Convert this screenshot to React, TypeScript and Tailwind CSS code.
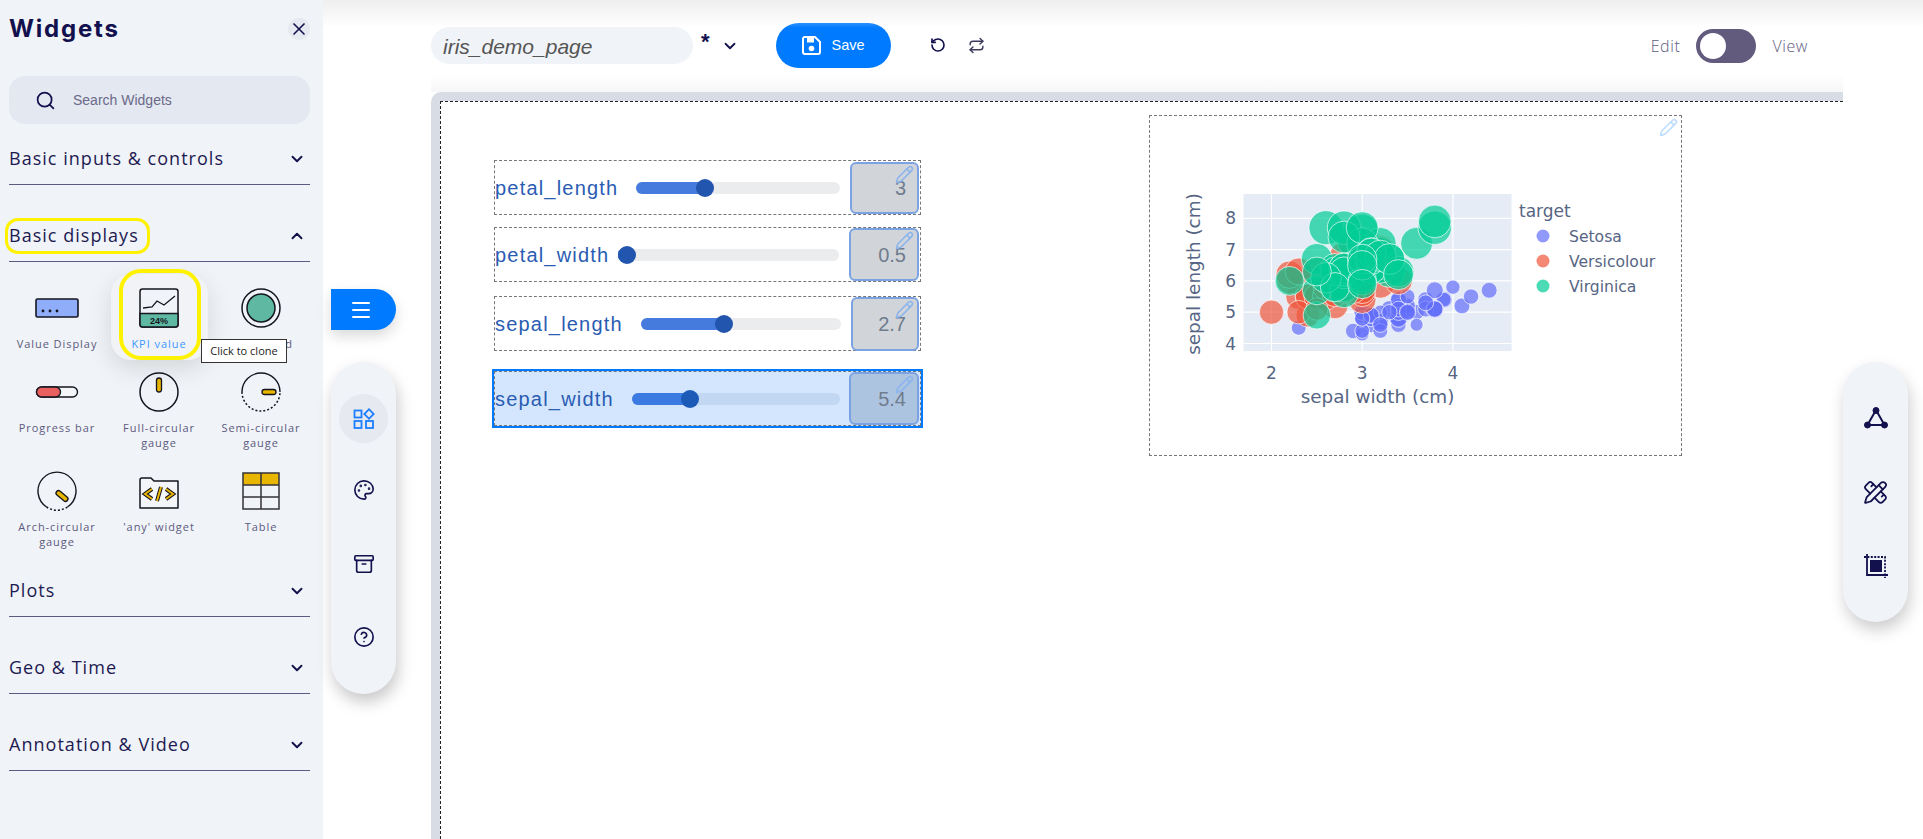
import { Archive, ChevronDown, ChevronUp, CircleHelp, Menu, Palette, Pencil, PencilRuler, Repeat, RotateCcw, Search, X } from "lucide-react";

const setosa = [[5.1,3.5,1.4],[4.9,3,1.4],[4.7,3.2,1.3],[4.6,3.1,1.5],[5,3.6,1.4],[5.4,3.9,1.7],[4.6,3.4,1.4],[5,3.4,1.5],[4.4,2.9,1.4],[4.9,3.1,1.5],[5.4,3.7,1.5],[4.8,3.4,1.6],[4.8,3,1.4],[4.3,3,1.1],[5.8,4,1.2],[5.7,4.4,1.5],[5.4,3.9,1.3],[5.1,3.5,1.4],[5.7,3.8,1.7],[5.1,3.8,1.5],[5.4,3.4,1.7],[5.1,3.7,1.5],[4.6,3.6,1],[5.1,3.3,1.7],[4.8,3.4,1.9],[5,3,1.6],[5,3.4,1.6],[5.2,3.5,1.5],[5.2,3.4,1.4],[4.7,3.2,1.6],[4.8,3.1,1.6],[5.4,3.4,1.5],[5.2,4.1,1.5],[5.5,4.2,1.4],[4.9,3.1,1.5],[5,3.2,1.2],[5.5,3.5,1.3],[4.9,3.1,1.5],[4.4,3,1.3],[5.1,3.4,1.5],[5,3.5,1.3],[4.5,2.3,1.3],[4.4,3.2,1.3],[5,3.5,1.6],[5.1,3.8,1.9],[4.8,3,1.4],[5.1,3.8,1.6],[4.6,3.2,1.4],[5.3,3.7,1.5],[5,3.3,1.4]];
const versicolor = [[7,3.2,4.7],[6.4,3.2,4.5],[6.9,3.1,4.9],[5.5,2.3,4],[6.5,2.8,4.6],[5.7,2.8,4.5],[6.3,3.3,4.7],[4.9,2.4,3.3],[6.6,2.9,4.6],[5.2,2.7,3.9],[5,2,3.5],[5.9,3,4.2],[6,2.2,4],[6.1,2.9,4.7],[5.6,2.9,3.6],[6.7,3.1,4.4],[5.6,3,4.5],[5.8,2.7,4.1],[6.2,2.2,4.5],[5.6,2.5,3.9],[5.9,3.2,4.8],[6.1,2.8,4],[6.3,2.5,4.9],[6.1,2.8,4.7],[6.4,2.9,4.3],[6.6,3,4.4],[6.8,2.8,4.8],[6.7,3,5],[6,2.9,4.5],[5.7,2.6,3.5],[5.5,2.4,3.8],[5.5,2.4,3.7],[5.8,2.7,3.9],[6,2.7,5.1],[5.4,3,4.5],[6,3.4,4.5],[6.7,3.1,4.7],[6.3,2.3,4.4],[5.6,3,4.1],[5.5,2.5,4],[5.5,2.6,4.4],[6.1,3,4.6],[5.8,2.6,4],[5,2.3,3.3],[5.6,2.7,4.2],[5.7,3,4.2],[5.7,2.9,4.2],[6.2,2.9,4.3],[5.1,2.5,3],[5.7,2.8,4.1]];
const virginica = [[6.3,3.3,6],[5.8,2.7,5.1],[7.1,3,5.9],[6.3,2.9,5.6],[6.5,3,5.8],[7.6,3,6.6],[4.9,2.5,4.5],[7.3,2.9,6.3],[6.7,2.5,5.8],[7.2,3.6,6.1],[6.5,3.2,5.1],[6.4,2.7,5.3],[6.8,3,5.5],[5.7,2.5,5],[5.8,2.8,5.1],[6.4,3.2,5.3],[6.5,3,5.5],[7.7,3.8,6.7],[7.7,2.6,6.9],[6,2.2,5],[6.9,3.2,5.7],[5.6,2.8,4.9],[7.7,2.8,6.7],[6.3,2.7,4.9],[6.7,3.3,5.7],[7.2,3.2,6],[6.2,2.8,4.8],[6.1,3,4.9],[6.4,2.8,5.6],[7.2,3,5.8],[7.4,2.8,6.1],[7.9,3.8,6.4],[6.4,2.8,5.6],[6.3,2.8,5.1],[6.1,2.6,5.6],[7.7,3,6.1],[6.3,3.4,5.6],[6.4,3.1,5.5],[6,3,4.8],[6.9,3.1,5.4],[6.7,3.1,5.6],[6.9,3.1,5.1],[5.8,2.7,5.1],[6.8,3.2,5.9],[6.7,3.3,5.7],[6.7,3,5.2],[6.3,2.5,5],[6.5,3,5.2],[6.2,3.4,5.4],[5.9,3,5.1]];

const px = (v: number) => 121.5 + 90.7 * (v - 2);
const py = (v: number) => 227.5 - 31.3 * (v - 4);

function Chart() {
  const series: [number[][], string][] = [[setosa, "#636efa"], [versicolor, "#ef553b"], [virginica, "#00cc96"]];
  const tick = { fill: "#566583", fontFamily: "'DejaVu Sans', sans-serif", fontSize: 17 };
  return (
    <svg width="533" height="341" viewBox="0 0 533 341">
      <rect x="93.5" y="78" width="268" height="157" fill="#e5ecf6" />
      {[2, 3, 4].map((v) => <line key={v} x1={px(v)} x2={px(v)} y1="78" y2="235" stroke="#fff" strokeWidth="1.2" />)}
      {[4, 5, 6, 7, 8].map((v) => <line key={v} x1="93.5" x2="361.5" y1={py(v)} y2={py(v)} stroke="#fff" strokeWidth="1.2" />)}
      {series.map(([rows, color]) =>
        rows.map((r, i) => (
          <circle key={color + i} cx={px(r[1])} cy={py(r[0])} r={17 * Math.sqrt(r[2] / 6.9)} fill={color} fillOpacity="0.7" stroke="#fff" strokeOpacity="0.75" strokeWidth="0.9" />
        ))
      )}
      {[2, 3, 4].map((v) => <text key={v} x={px(v)} y="263" textAnchor="middle" {...tick}>{v}</text>)}
      {[4, 5, 6, 7, 8].map((v) => <text key={v} x="86" y={py(v) + 6} textAnchor="end" {...tick}>{v}</text>)}
      <text x="227.5" y="287" textAnchor="middle" {...tick} fontSize="18.4">sepal width (cm)</text>
      <text transform="translate(50 158) rotate(-90)" textAnchor="middle" {...tick} fontSize="18.4">sepal length (cm)</text>
      <text x="369" y="101" {...tick} fontSize="17">target</text>
      {[["Setosa", "#636efa"], ["Versicolour", "#ef553b"], ["Virginica", "#00cc96"]].map(([name, color], i) => (
        <g key={name}>
          <circle cx="393" cy={120 + i * 25} r="6.5" fill={color} fillOpacity="0.7" />
          <text x="419" y={125.5 + i * 25} {...tick} fontSize="15.6">{name}</text>
        </g>
      ))}
    </svg>
  );
}

type SliderProps = { label: string; value: string; rowClass: string; labelClass: string; trackClass: string; fillClass: string; boxClass: string; selected?: boolean };

function SliderRow({ label, value, rowClass, labelClass, trackClass, fillClass, boxClass, selected }: SliderProps) {
  return (
    <div className={`flex items-center border border-dashed border-[#777] h-[55px] ${rowClass}`}>
      <span className={`text-[20px] text-[#2a5cb3] font-['Liberation_Sans',sans-serif] whitespace-nowrap tracking-[1.2px] ${labelClass}`}>{label}</span>
      <div className={`relative h-3 rounded-full ${selected ? "bg-[#c2d7f1]" : "bg-[#ebecee]"} ${trackClass}`}>
        <div className={`relative h-3 rounded-full ${selected ? "bg-[#3b7ae0]" : "bg-[#467bde]"} ${fillClass}`}>
          <div className={`absolute right-[-9px] top-[-3px] w-[18px] h-[18px] rounded-full ${selected ? "bg-[#1c5ab8]" : "bg-[#2255ae]"}`} />
        </div>
      </div>
      <div className={`relative ml-auto flex items-center justify-end pr-[11px] rounded-md border-2 border-[#7ba3e3] text-[20px] text-[#6f7c8e] font-['Liberation_Sans',sans-serif] ${selected ? "bg-[#adc4e0] text-[#5d7899]" : "bg-[#d1d4d8]"} ${boxClass}`}>
        {value}
        <Pencil className="absolute right-[3px] top-[1px] text-[#8ab4ee]" size={19} strokeWidth={2} />
      </div>
    </div>
  );
}

const stroke = "#15151f";

const widgetIcons: Record<string, React.ReactNode> = {
  value: (
    <svg width="44" height="40" viewBox="0 0 44 40">
      <rect x="1" y="11" width="42" height="18" rx="1.5" fill="#8fadf9" stroke={stroke} strokeWidth="1.6" />
      <circle cx="8" cy="23" r="1.4" fill={stroke} /><circle cx="15" cy="23" r="1.4" fill={stroke} /><circle cx="22" cy="23" r="1.4" fill={stroke} />
    </svg>
  ),
  kpi: (
    <svg width="40" height="40" viewBox="0 0 40 40">
      <rect x="1" y="1" width="38" height="38" rx="2.5" fill="#f0f3f7" stroke={stroke} strokeWidth="1.5" />
      <path d="M1 25.5h38v11a2.5 2.5 0 0 1-2.5 2.5h-33A2.5 2.5 0 0 1 1 36.5z" fill="#5fb8a2" stroke={stroke} strokeWidth="1.5" />
      <path d="M4 20l9-1 5-6 7 4 11-9" fill="none" stroke={stroke} strokeWidth="1.3" />
      <text x="20" y="36" textAnchor="middle" fontFamily="'Liberation Sans',sans-serif" fontWeight="700" fontSize="9" fill={stroke}>24%</text>
    </svg>
  ),
  connected: (
    <svg width="40" height="40" viewBox="0 0 40 40">
      <circle cx="20" cy="20" r="19" fill="none" stroke={stroke} strokeWidth="1.5" />
      <circle cx="20" cy="20" r="14" fill="#5fb8a2" stroke={stroke} strokeWidth="1.5" />
    </svg>
  ),
  progress: (
    <svg width="44" height="40" viewBox="0 0 44 40">
      <rect x="1.5" y="15" width="41" height="10" rx="5" fill="#f4f5f8" stroke={stroke} strokeWidth="1.4" />
      <rect x="1.5" y="15" width="24" height="10" rx="5" fill="#e96060" stroke={stroke} strokeWidth="1.4" />
    </svg>
  ),
  full: (
    <svg width="40" height="40" viewBox="0 0 40 40">
      <circle cx="20" cy="20" r="19" fill="none" stroke={stroke} strokeWidth="1.5" />
      <rect x="17.5" y="6" width="5" height="14" rx="2.5" fill="#e8b500" stroke={stroke} strokeWidth="1.3" />
    </svg>
  ),
  semi: (
    <svg width="40" height="40" viewBox="0 0 40 40">
      <path d="M1 20a19 19 0 0 1 38 0" fill="none" stroke={stroke} strokeWidth="1.4" />
      <path d="M1 20a19 19 0 0 0 38 0" fill="none" stroke={stroke} strokeWidth="1.5" strokeDasharray="2 2" />
      <rect x="21" y="17.5" width="14" height="5" rx="2.5" fill="#e8b500" stroke={stroke} strokeWidth="1.3" />
    </svg>
  ),
  arch: (
    <svg width="40" height="40" viewBox="0 0 40 40">
      <path d="M9.5 36A19 19 0 1 1 30.5 36" fill="none" stroke={stroke} strokeWidth="1.4" />
      <path d="M9.5 36a19 19 0 0 0 21 0" fill="none" stroke={stroke} strokeWidth="1.5" strokeDasharray="2 2" />
      <rect x="18" y="22.5" width="14" height="5" rx="2.5" fill="#e8b500" stroke={stroke} strokeWidth="1.3" transform="rotate(40 25 25)" />
    </svg>
  ),
  any: (
    <svg width="40" height="40" viewBox="0 0 40 40">
      <path d="M1 9a2 2 0 0 1 2-2h9l3 3h24v27H1z" fill="#f4f5f8" stroke={stroke} strokeWidth="1.5" strokeLinejoin="round" />
      <path d="M13 18l-7 5 7 5M27 18l7 5-7 5M22 16l-4 14" fill="none" stroke={stroke} strokeWidth="4" />
      <path d="M13 18l-7 5 7 5M27 18l7 5-7 5M22 16l-4 14" fill="none" stroke="#e8b500" strokeWidth="2" />
    </svg>
  ),
  table: (
    <svg width="40" height="40" viewBox="0 0 40 40">
      <rect x="2" y="2" width="36" height="36" fill="#f0f3f7" />
      <rect x="2" y="2" width="36" height="12" fill="#e8b500" />
      <path d="M2 2h36v36H2zM2 14h36M2 26h36M20 2v36" fill="none" stroke="#33333a" strokeWidth="1.5" />
    </svg>
  ),
};

function Widget({ icon, label, labelClass = "text-[#5c5a80]" }: { icon: string; label: string; labelClass?: string }) {
  return (
    <div className="flex flex-col items-center">
      <div className="h-10 flex items-center justify-center">{widgetIcons[icon]}</div>
      <div className={`mt-2 w-[90px] text-center text-[11px] leading-[15px] tracking-[0.95px] font-['Open_Sans',sans-serif] ${labelClass}`}>{label}</div>
    </div>
  );
}

function Section({ title, heightClass = "h-[77px]", open }: { title: string; heightClass?: string; open?: boolean }) {
  const Icon = open ? ChevronUp : ChevronDown;
  return (
    <div className={`flex items-end justify-between pb-[13px] border-b border-[#5c5a80] ${heightClass}`}>
      <span className="text-[18px] leading-[26px] tracking-[1.03px] text-[#1d1a52] font-['Open_Sans',sans-serif]">{title}</span>
      <Icon size={18} strokeWidth={2.5} className="text-[#12104a] mr-[4px] mb-[3px]" />
    </div>
  );
}

const ink = "#13104e";

export default function App() {
  return (
    <div className="relative flex w-[1923px] h-[839px] overflow-hidden bg-white">
      <div className="absolute left-[323px] right-0 top-0 h-[28px] bg-gradient-to-b from-[#efefef] to-transparent z-10 pointer-events-none" />

      <aside className="w-[323px] shrink-0 h-full bg-[#f0f3f7] pl-[9px] pr-[13px]">
        <div className="flex justify-between pt-[18px] h-[76px] items-start">
          <h1 className="text-[24px] leading-[22px] font-bold tracking-[1.8px] text-[#13104e] font-['Inter',sans-serif]">Widgets</h1>
          <button className="w-[22px] h-[22px] rounded-full bg-[#e6e9f0] flex items-center justify-center">
            <X size={20} strokeWidth={2} className="text-[#13104e]" />
          </button>
        </div>
        <div className="flex items-center h-[48px] rounded-2xl bg-[#e4e8f0]">
          <Search size={21} strokeWidth={2} className="ml-[26px] text-[#13104e]" />
          <span className="ml-[17px] text-[14px] text-[#6b6a8a] font-['Liberation_Sans',sans-serif]">Search Widgets</span>
        </div>
        <Section title="Basic inputs & controls" heightClass="h-[61px]" />
        <div className="relative">
          <Section title="Basic displays" open />
          <div className="absolute left-[-4px] top-[33px] w-[145px] h-[36px] rounded-[13px] border-[3.5px] border-[#fff200]" />
        </div>
        <div className="relative grid grid-cols-[102px_102px_102px] grid-rows-[84px_99px_69px] -ml-[3px] pt-[26px] h-[278px]">
          <Widget icon="value" label="Value Display" />
          <div className="relative flex flex-col items-center">
            <div className="absolute left-[3px] top-[-14px] w-[97px] h-[86px] rounded-[20px] bg-[#f1f3f7] shadow-[0_8px_24px_rgba(0,0,0,0.12)]" />
            <div className="absolute left-[11px] top-[-19px] w-[82px] h-[91px] rounded-[22px] border-4 border-[#fff200]" />
            <div className="relative"><Widget icon="kpi" label="KPI value" labelClass="text-[#3f97ff]" /></div>
          </div>
          <Widget icon="connected" label="Connected" />
          <Widget icon="progress" label="Progress bar" />
          <Widget icon="full" label="Full-circular gauge" />
          <Widget icon="semi" label="Semi-circular gauge" />
          <Widget icon="arch" label="Arch-circular gauge" />
          <Widget icon="any" label="'any' widget" />
          <Widget icon="table" label="Table" />
          <div className="absolute left-[195px] top-[77px] w-[86px] h-[24px] flex items-center justify-center bg-white border border-[#333] text-[11px] text-[#222] font-['Open_Sans',sans-serif] whitespace-nowrap">Click to clone</div>
        </div>
        <Section title="Plots" />
        <Section title="Geo & Time" />
        <Section title="Annotation & Video" />
      </aside>

      <div className="w-[108px] shrink-0 pl-[8px] pt-[289px]">
        <button className="flex items-center justify-center w-[65px] h-[41px] pr-[5px] rounded-r-full bg-[#007bff] shadow-[0_6px_14px_rgba(0,0,0,0.15)]">
          <Menu size={24} strokeWidth={2} className="text-white" />
        </button>
        <div className="mt-[32px] w-[65px] h-[332px] rounded-full bg-[#f0f3f7] shadow-[2px_8px_16px_rgba(0,0,0,0.22)] flex flex-col items-center pt-[32px]">
          <div className="w-[49px] h-[49px] rounded-full bg-[#e6e9f0] flex items-center justify-center">
            <svg width="22" height="22" viewBox="0 0 22 22" fill="none" stroke="#1c7eff" strokeWidth="1.8">
              <rect x="1.5" y="2.5" width="7" height="7" />
              <rect x="1.5" y="13" width="7" height="7" />
              <rect x="13" y="13" width="7" height="7" />
              <rect x="12.7" y="2.7" width="6.6" height="6.6" transform="rotate(45 16 6)" />
            </svg>
          </div>
          <Palette size={22} strokeWidth={1.8} color={ink} className="mt-[36px]" />
          <Archive size={22} strokeWidth={1.8} color={ink} className="mt-[52px]" />
          <CircleHelp size={22} strokeWidth={1.8} color={ink} className="mt-[51px]" />
        </div>
      </div>

      <main className="w-[1412px] shrink-0 flex flex-col">
        <header className="h-[92px] shrink-0 flex items-start bg-gradient-to-b from-white from-[80%] to-[#f7f7f7]">
          <div className="mt-[27px] w-[262px] h-[37px] rounded-full bg-[#f0f3f7] flex items-center pl-[12px] pt-[2px] text-[21px] italic text-[#555] font-['Liberation_Sans',sans-serif]">iris_demo_page</div>
          <span className="ml-[8px] mt-[29px] text-[22px] leading-[26px] font-bold text-[#13104e] font-['Liberation_Sans',sans-serif]">*</span>
          <ChevronDown size={18} strokeWidth={2.4} color={ink} className="ml-[11px] mt-[37px]" />
          <button className="ml-[37px] mt-[23px] w-[115px] h-[45px] rounded-full bg-[#007bff] flex items-center justify-center gap-[11px] text-white text-[14.5px] font-['Liberation_Sans',sans-serif]">
            <svg width="19" height="19" viewBox="0 0 19 19">
              <path d="M1 3a2 2 0 0 1 2-2h10l5 5v10a2 2 0 0 1-2 2H3a2 2 0 0 1-2-2z" fill="none" stroke="#fff" strokeWidth="2" />
              <rect x="5" y="1.5" width="7" height="5" fill="#fff" />
              <circle cx="9.5" cy="12.5" r="2.8" fill="#fff" />
            </svg>
            Save
          </button>
          <RotateCcw size={16} strokeWidth={2.5} color={ink} className="ml-[39px] mt-[37px]" />
          <Repeat size={17} strokeWidth={2} color="#3c3a5c" className="ml-[22px] mt-[37px]" />
          <div className="ml-auto mt-[29px] mr-[35px] flex items-center text-[16px] tracking-[0.6px] font-light text-[#5f5b80] font-['Open_Sans',sans-serif]">
            <span>Edit</span>
            <div className="ml-[16px] mr-[16px] flex items-center w-[60px] h-[34px] rounded-full bg-[#625b7d] pl-[4px]">
              <div className="w-[26px] h-[26px] rounded-full bg-white" />
            </div>
            <span>View</span>
          </div>
        </header>
        <section className="flex-1 rounded-tl-[10px] bg-[#d8dce5] pl-[9px] pt-[9px]">
          <div className="h-full bg-white border-l border-t border-dashed border-[#222] flex items-start">
            <div className="ml-[53px] pt-[58px] w-[429px] flex flex-col">
              <SliderRow label="petal_length" value="3" rowClass="w-[427px]" labelClass="w-[141px]" trackClass="w-[204px]" fillClass="w-[69px]" boxClass="w-[69px] h-[52px] mr-px" />
              <SliderRow label="petal_width" value="0.5" rowClass="w-[427px] mt-[12px]" labelClass="w-[123px]" trackClass="w-[221px]" fillClass="w-[9px]" boxClass="w-[70px] h-[53px] mr-px" />
              <SliderRow label="sepal_length" value="2.7" rowClass="w-[427px] mt-[14px]" labelClass="w-[146px]" trackClass="w-[200px]" fillClass="w-[83px]" boxClass="w-[68px] h-[54px] mr-px" />
              <div className="mt-[18px] -ml-[2px] w-[431px] border-2 border-[#007bff]">
                <SliderRow selected label="sepal_width" value="5.4" rowClass="w-[427px] bg-[#d3e6fd]" labelClass="w-[137px]" trackClass="w-[208px]" fillClass="w-[58px]" boxClass="w-[70px] h-[53px] mr-px" />
              </div>
            </div>
            <div className="relative mt-[13px] ml-[226px] w-[533px] h-[341px] border border-dashed border-[#777]">
              <Chart />
              <Pencil className="absolute right-[3px] top-[2px] text-[#bcdcff]" size={19} strokeWidth={2} />
            </div>
          </div>
        </section>
      </main>

      <div className="shrink-0 pt-[362px]">
        <div className="w-[65px] h-[260px] rounded-full bg-[#f0f3f7] shadow-[2px_8px_16px_rgba(0,0,0,0.2)] flex flex-col items-center pt-[44px]">
          <svg width="24" height="24" viewBox="0 0 24 24" fill={ink} stroke={ink}>
            <path d="M12 4L3.5 19h17z" fill="none" strokeWidth="2" />
            <circle cx="12" cy="4.5" r="3" /><circle cx="3.5" cy="19" r="3" /><circle cx="20.5" cy="19" r="3" />
          </svg>
          <PencilRuler size={25} strokeWidth={1.7} color={ink} className="mt-[50px]" />
          <svg width="26" height="26" viewBox="0 0 26 26" className="mt-[48px]" fill="none" stroke={ink}>
            <rect x="7" y="7" width="12" height="12" fill={ink} stroke="none" />
            <path d="M4 1v21h21" strokeWidth="1.8" />
            <path d="M1 4h21v21" strokeWidth="1.8" strokeDasharray="2 1.4" />
          </svg>
        </div>
      </div>
    </div>
  );
}
